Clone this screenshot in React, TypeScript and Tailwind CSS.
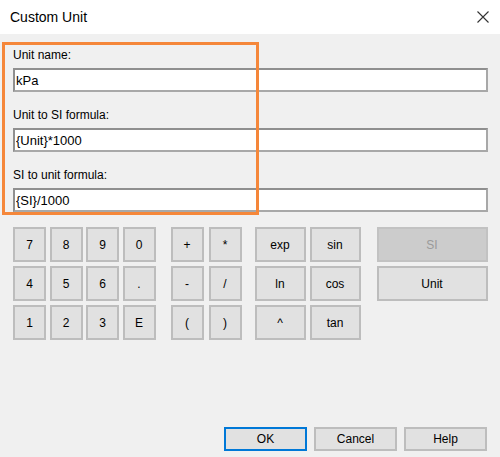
import React from 'react';

const font = { fontFamily: '"Liberation Sans", Arial, sans-serif' };

const Btn = ({ label, className = '' }: { label: string; className?: string }) => (
  <button
    className={`h-[35px] flex items-center justify-center bg-[#e1e1e1] border-2 border-[#bdbdbd] text-[12px] text-black ${className}`}
  >
    {label}
  </button>
);

const Field = ({ label, value }: { label: string; value: string }) => (
  <div className="flex flex-col">
    <label className="h-[14px] leading-[14px] text-[12px] text-black">{label}</label>
    <input
      readOnly
      value={value}
      className="mt-[6px] h-[24px] w-full bg-white border-2 border-t-[#8f8f8f] border-l-[#8f8f8f] border-b-[#a8a8a8] border-r-[#a8a8a8] px-[1px] text-[13px] text-black outline-none"
      style={font}
    />
  </div>
);

export default function App() {
  const nums = ['7', '8', '9', '0', '4', '5', '6', '.', '1', '2', '3', 'E'];
  const ops = ['+', '*', '-', '/', '(', ')'];
  const funcs = ['exp', 'sin', 'ln', 'cos', '^', 'tan'];

  return (
    <div className="relative w-[500px] h-[457px] bg-[#f0f0f0] flex flex-col overflow-hidden" style={font}>
      {/* title bar */}
      <div className="h-[34px] bg-white flex items-center justify-between pl-[10px] pr-[11px] shrink-0">
        <span className="text-[14px] text-black">Custom Unit</span>
        <svg width="12" height="12" viewBox="0 0 12 12" className="text-[#333]">
          <path d="M0.5 0.5 L11.5 11.5 M11.5 0.5 L0.5 11.5" stroke="currentColor" strokeWidth="1.1" />
        </svg>
      </div>

      <div className="flex flex-col px-[13px] pr-[12px] pt-[14px] gap-[16px]">
        <Field label="Unit name:" value="kPa" />
        <Field label="Unit to SI formula:" value="{Unit}*1000" />
        <Field label="SI to unit formula:" value="{SI}/1000" />
      </div>

      {/* keypad */}
      <div className="flex pl-[13px] mt-[15px]">
        <div className="grid grid-cols-[repeat(4,33px)] gap-x-[3.5px] gap-y-[4px]">
          {nums.map(n => <Btn key={n} label={n} />)}
        </div>
        <div className="grid grid-cols-[repeat(2,33px)] gap-x-[5px] gap-y-[4px] ml-[15px]">
          {ops.map(n => <Btn key={n} label={n} />)}
        </div>
        <div className="grid grid-cols-[repeat(2,51px)] gap-x-[4px] gap-y-[4px] ml-[13px]">
          {funcs.map(n => <Btn key={n} label={n} />)}
        </div>
        <div className="flex flex-col gap-[4px] ml-[16px]">
          <button className="w-[111px] h-[35px] bg-[#cccccc] border-2 border-[#c2c2c2] text-[12px] text-[#9a9a9a]">SI</button>
          <Btn label="Unit" className="w-[111px]" />
        </div>
      </div>

      {/* dialog buttons */}
      <div className="mt-auto flex justify-end gap-[7px] pr-[13px] pb-[6px]">
        <button className="w-[83px] h-[24px] bg-[#e1e1e1] border-2 border-[#0078d7] text-[12px] text-black">OK</button>
        <button className="w-[83px] h-[24px] bg-[#e1e1e1] border-2 border-[#bdbdbd] text-[12px] text-black">Cancel</button>
        <button className="w-[83px] h-[24px] bg-[#e1e1e1] border-2 border-[#bdbdbd] text-[12px] text-black">Help</button>
      </div>

      {/* orange highlight annotation */}
      <div className="absolute left-[2px] top-[42px] w-[257px] h-[173px] border-[3px] border-[#f5873a] pointer-events-none" />
    </div>
  );
}
